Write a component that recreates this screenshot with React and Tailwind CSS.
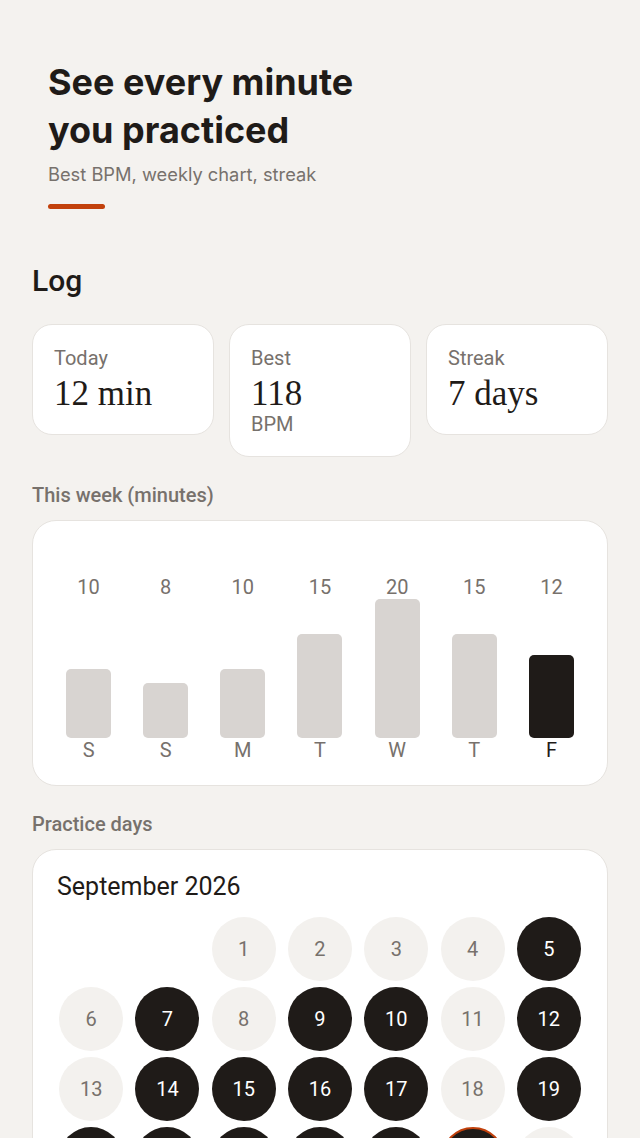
import React from "react";

const roboto = { fontFamily: "Roboto, 'Liberation Sans', sans-serif" };

const week = [
  { d: "S", v: 10 },
  { d: "S", v: 8 },
  { d: "M", v: 10 },
  { d: "T", v: 15 },
  { d: "W", v: 20 },
  { d: "T", v: 15 },
  { d: "F", v: 12, today: true },
];

const practiced = new Set([5, 7, 9, 10, 12, 14, 15, 16, 17, 19, 20, 21, 22, 23, 24, 25]);

function StatCard({ label, value, sub }) {
  return (
    <div className="flex-1 bg-white border border-[#e6e3df] rounded-[20px] px-[21px] pt-[21px] pb-[20px] self-start">
      <div className="text-[20px] leading-[24px] text-[#77716c]" style={roboto}>{label}</div>
      <div
        className="text-[35px] leading-[40px] text-[#1f1b18] mt-[4px]"
        style={{ fontFamily: "'Liberation Serif', 'DejaVu Serif', serif" }}
      >
        {value}
      </div>
      {sub && (
        <div className="text-[20px] leading-[24px] text-[#77716c] mt-[-2px]" style={roboto}>{sub}</div>
      )}
    </div>
  );
}

export default function App() {
  const cells = [];
  for (let i = 0; i < 2; i++) cells.push(null);
  for (let d = 1; d <= 30; d++) cells.push(d);

  return (
    <div className="min-h-[1138px] bg-[#f4f2ef] w-[640px] overflow-hidden">
      <div className="px-12 pt-[58px]">
        <h1
          className="text-[36px] leading-[48px] font-bold text-[#1f1b18]"
          style={{ fontFamily: "Inter, 'Liberation Sans', sans-serif" }}
        >
          See every minute
          <br />
          you practiced
        </h1>
        <p
          className="mt-[8px] text-[18.3px] leading-[24px] text-[#77716c]"
          style={{ fontFamily: "Inter, 'Liberation Sans', sans-serif" }}
        >
          Best BPM, weekly chart, streak
        </p>
        <div className="mt-[18px] w-[57px] h-[5px] rounded-full bg-[#c2410c]" />
      </div>

      <div className="px-8 pt-[54px]" style={roboto}>
        <h2 className="text-[30px] leading-[36px] font-medium text-[#1f1b18]">Log</h2>

        <div className="mt-[25px] flex gap-[15px] items-start">
          <StatCard label="Today" value="12 min" />
          <StatCard label="Best" value="118" sub="BPM" />
          <StatCard label="Streak" value="7 days" />
        </div>

        <div className="mt-[26px] text-[20px] leading-[24px] font-medium text-[#77716c]">This week (minutes)</div>
        <div className="mt-[13px] bg-white border border-[#e6e3df] rounded-[24px] px-[17px] pt-[55px] pb-[23px]">
          <div className="grid grid-cols-7">
            {week.map((w, i) => (
              <div key={i} className="flex flex-col items-center">
                <div className="text-[20px] leading-[22px] text-[#77716c]">{w.v}</div>
                <div className="h-[140px] w-full flex items-end justify-center">
                  <div
                    className={`w-[45px] rounded-[5px] ${w.today ? "bg-[#1f1b18]" : "bg-[#d8d4d1]"}`}
                    style={{ height: `${w.v * 7 - 1}px` }}
                  />
                </div>
                <div className={`text-[20px] leading-[24px] ${w.today ? "text-[#1f1b18]" : "text-[#77716c]"}`}>{w.d}</div>
              </div>
            ))}
          </div>
        </div>

        <div className="mt-[26px] text-[20px] leading-[24px] font-medium text-[#77716c]">Practice days</div>
        <div className="mt-[13px] bg-white border border-[#e6e3df] rounded-[24px] px-[26px] pt-[22px] pb-[24px]">
          <div className="text-[25px] leading-[30px] text-[#1f1b18] ml-[-2px]">September 2026</div>
          <div className="mt-[15px] grid grid-cols-7 gap-x-[12px] gap-y-[6px]">
            {cells.map((d, i) => {
              if (d === null) return <div key={i} className="h-16" />;
              const on = practiced.has(d);
              const today = d === 25;
              return (
                <div key={i} className="flex justify-center">
                  <div
                    className={`w-16 h-16 rounded-full flex items-center justify-center text-[20px] ${
                      on ? "bg-[#1f1b18] text-white" : "bg-[#f3f1ee] text-[#77716c]"
                    } ${today ? "border-2 border-[#c2410c]" : ""}`}
                  >
                    {d}
                  </div>
                </div>
              );
            })}
          </div>
        </div>
      </div>
    </div>
  );
}
